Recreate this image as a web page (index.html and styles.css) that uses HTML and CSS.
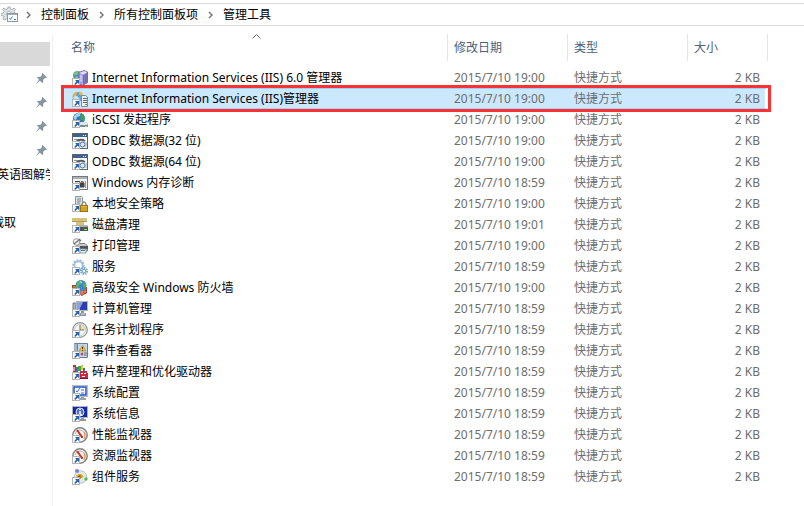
FILE: index.html
```html
<!DOCTYPE html>
<html lang="zh-CN">
  <head>
    <meta charset="UTF-8" />
    <meta name="viewport" content="width=device-width, initial-scale=1.0" />
    <title>管理工具</title>
    <link rel="stylesheet" href="styles.css">
  </head>
  <body>

    <!-- shared icon parts -->
    <svg class="defs" width="0" height="0">
      <symbol id="arrow" viewBox="0 0 16 16">
        <rect x="0.500" y="8.500" width="7" height="7" fill="#fff" stroke="#b4b4b4" />
        <path d="M3 10h4v4L5.600 12.700 3.300 15 2.200 13.900 4.400 11.500z" fill="#2a62ad" />
      </symbol>
      <symbol id="pin" viewBox="0 0 10 10">
        <path d="M6 0l4 4-1 .6-.8-.1L6.500 6.200l.1 1.900-1 .9-2-2L0 10l2.700-3.800L1 4.400l.9-.9 1.900.1 1.700-1.700L5.300.8z" fill="#8795a3" />
      </symbol>
      <symbol id="iis6" viewBox="0 0 16 16">
        <circle cx="5.500" cy="5.500" r="4.500" fill="#4e91d2" />
        <path d="M2 3q2-2 4-2l1 2-2 2H2zM3 7l3-1 1 3-3 1z" fill="#7cc06c" />
        <path d="M7 2.500L12 .5l3.500 1.500v10.500l-5 3L7 13.500z" fill="#a9a3d9" stroke="#716aa9" />
        <path d="M11 5l4-2v9.500l-4 2.500z" fill="#7871b8" />
        <path d="M7.500 3L12 1l3 1.300L11 4.500z" fill="#e2dff5" />
        <path d="M8 6l2 1M8 8l2 1M8 10l2 1" stroke="#e6e3f8" />
      </symbol>
      <symbol id="iis" viewBox="0 0 16 16">
        <circle cx="5.500" cy="6" r="5" fill="#5ba5dd" />
        <path d="M1 6q2-2 4-1l3 3-3 2-3-1z" fill="#c3e6f8" />
        <path d="M1 4q1-3 5-3.500L4 3l1 1-3 2zM7 .5q3 0 4 3l-2 1L7 3z" fill="#f2b43b" />
        <path d="M9.500 4.500h4l2 1.500v9.500h-6z" fill="#eef2f4" stroke="#7e8b95" />
        <path d="M11 7.500h4M11 9.500h4M11 11.500h4" stroke="#5d6a74" />
        <rect x="13" y="13" width="2" height="1" fill="#50a44a" />
      </symbol>
      <symbol id="iscsi" viewBox="0 0 16 16">
        <circle cx="7" cy="6.500" r="6" fill="#3a77b8" />
        <path d="M2 4q3-4 7-3L8 4 5 5 4 8 2 7z" fill="#a5d3ee" />
        <path d="M8 2q4 0 5 4l-2 3-3-2 1-2z" fill="#43a44c" />
        <path d="M7 11l2-1h5l2 2v3H7z" fill="#7f8c96" />
        <path d="M7 11l2-1h5l2 2-1 1H8z" fill="#e0e7eb" />
        <rect x="13" y="14" width="2" height="1" fill="#7be06c" />
      </symbol>
      <symbol id="odbc" viewBox="0 0 16 16">
        <rect x="0.500" y="0.500" width="15" height="15" fill="#f7f7f7" stroke="#596473" />
        <rect x="1" y="1" width="14" height="3" fill="#3f628d" />
        <path d="M11 2.500h1M13 2.500h1" stroke="#fff" />
        <path d="M2 6.500h6" stroke="#8a9096" />
        <path d="M4 9q4-4 9-1" fill="none" stroke="#565d65" stroke-width="2" />
        <circle cx="10.500" cy="11.500" r="2.500" fill="#dce6ee" stroke="#557696" />
        <path d="M14 9v5" stroke="#a4abb2" />
      </symbol>
      <symbol id="memory" viewBox="0 0 16 16">
        <rect x="0.500" y="1.500" width="15" height="13" fill="#f3f3f3" stroke="#777" />
        <rect x="1" y="2" width="14" height="2" fill="#a8b2bb" />
        <path d="M3 6.500h5M7 8h5v4H8z" fill="#444" stroke="#444" />
        <path d="M9 6.500l3 1M3 8.500h3" fill="none" stroke="#895755" stroke-width="1.500" />
        <path d="M13.500 6v7" stroke="#999" />
      </symbol>
      <symbol id="policy" viewBox="0 0 16 16">
        <path d="M3.500 .5h6l1 1v12h-7z" fill="#dce1e3" stroke="#8c969c" />
        <path d="M5 3h4M5 5h4M5 7h3" stroke="#7a868c" />
        <path d="M10 10V8q2-4 4 0v2" fill="none" stroke="#8d8d86" stroke-width="1.500" />
        <rect x="8.500" y="9.500" width="7" height="6" fill="#eab82e" stroke="#9d7312" />
        <path d="M9 12h6M9 14h6" stroke="#bd8a1c" />
      </symbol>
      <symbol id="clean" viewBox="0 0 16 16">
        <path d="M0 1h15v4h-3v4H4V5H0z" fill="#d6c17f" />
        <path d="M0 4.500h15" stroke="#b39b58" />
        <path d="M6 8h9l1 2v4H6z" fill="#4e5356" />
        <path d="M6 8h9l1 2H6z" fill="#a8aeb2" />
        <rect x="12" y="12" width="3" height="1" fill="#75e760" />
      </symbol>
      <symbol id="printer" viewBox="0 0 16 16">
        <path d="M5 5.500h8l2.500 2.500v5H6z" fill="#c3c9cd" stroke="#7c8388" />
        <path d="M8 8h8v3H8z" fill="#4d5357" />
        <path d="M8 11h6v4H8z" fill="#eff4f7" stroke="#8b9499" />
        <path d="M9 12.500h4" stroke="#3577b3" />
        <circle cx="4.500" cy="4" r="3.300" fill="#f3f3f3" stroke="#90979c" />
        <path d="M2 6l5-4M7 1l2 2" stroke="#777" stroke-width="1.500" />
      </symbol>
      <symbol id="services" viewBox="0 0 16 16">
        <circle cx="6.500" cy="6.500" r="5" fill="none" stroke="#9fbdd5" stroke-width="2.500" stroke-dasharray="2 1" />
        <circle cx="6.500" cy="6.500" r="4" fill="#fff" stroke="#9bbdd7" stroke-width="1.500" />
        <circle cx="12" cy="12" r="3" fill="#fff" stroke="#73a6cd" stroke-width="2" stroke-dasharray="1.500 .8" />
        <circle cx="12" cy="12" r="1.800" fill="#fff" stroke="#73a6cd" />
      </symbol>
      <symbol id="firewall" viewBox="0 0 16 16">
        <path d="M0 5h7l4 2h4v6l-5 3-10-6z" fill="#a64632" />
        <path d="M1 7h6M7 12h7M8 14h4M10 10v4M13 9v3" stroke="#dc967e" />
        <circle cx="9" cy="5.500" r="5.500" fill="#3d88c5" />
        <path d="M5 3q2-3 5-3L9 3 7 5 6 9 4 7z" fill="#5fb757" />
        <path d="M11 2l3 2v4l-3-1z" fill="#58ae50" />
        <path d="M8 1l2 1-1 2z" fill="#cdebf6" />
      </symbol>
      <symbol id="computer" viewBox="0 0 16 16">
        <path d="M1 2h3v9H1z" fill="#aab3bc" stroke="#737e88" />
        <rect x="4.500" y="0.500" width="11" height="9" fill="#2c3fac" stroke="#b4b9c0" />
        <path d="M5 1h6L7 9H5z" fill="#8ba1e6" />
        <path d="M9 10h3v2h2v3H8v-3h1z" fill="#89939b" />
        <path d="M9 13h4" stroke="#dce2e5" />
      </symbol>
      <symbol id="clock" viewBox="0 0 16 16">
        <circle cx="8" cy="8" r="7.300" fill="#f4f5f4" stroke="#8d969d" stroke-width="1.200" />
        <path d="M8 8V2a6 6 0 0 1 6 6z" fill="#f5df9e" />
        <circle cx="8" cy="8" r="5.500" fill="none" stroke="#c6ccd1" />
        <path d="M8 3v5h4" fill="none" stroke="#69757e" />
      </symbol>
      <symbol id="events" viewBox="0 0 16 16">
        <path d="M2.500 .5h13v14h-13z" fill="#c3d7e9" stroke="#6681a2" />
        <path d="M3 1h3v13H3z" fill="#6387b0" />
        <path d="M1 2h4M1 4h4M1 6h4M1 8h4" stroke="#e2e7ec" />
        <path d="M10.500 2l3.500 6H7z" fill="#efbf2f" stroke="#9a781d" stroke-width=".5" />
        <path d="M10.500 4v2M10.500 7v1" stroke="#4b3b12" />
        <circle cx="10" cy="11" r="1.500" fill="#d74a42" />
        <path d="M12 10h3M12 12h3" stroke="#667b91" />
      </symbol>
      <symbol id="defrag" viewBox="0 0 16 16">
        <path d="M1 1h3v8H1z" fill="#c32e3a" />
        <path d="M4 3h2v6H4z" fill="#4669c0" />
        <path d="M6 2h3v5H6z" fill="#3fa744" />
        <path d="M9 1h2v5H9z" fill="#e6c736" />
        <path d="M11 4h2v4h-2z" fill="#4669c0" />
        <path d="M8 7h7v2h1v6H8z" fill="#c9283f" />
        <path d="M2 3v4M9 9.500h2M12 9.500h2M10 12.500h3" stroke="#fff" />
        <path d="M8 14.500h8" stroke="#6e1732" />
      </symbol>
      <symbol id="config" viewBox="0 0 16 16">
        <rect x="0.500" y="0.500" width="15" height="11" fill="#fff" stroke="#b5bbc2" />
        <rect x="2" y="2" width="12" height="8" fill="#f4f8ff" stroke="#2350c4" stroke-width="1.500" />
        <path d="M4 6l1 1 3-4M9 5h3M9 8h3" fill="none" stroke="#3a72cf" />
        <path d="M9 12h3v1h2v2H8v-2h1z" fill="#9aa2a9" />
      </symbol>
      <symbol id="info" viewBox="0 0 16 16">
        <rect x="0.500" y="0.500" width="15" height="11" fill="#1429a0" stroke="#aeb5bd" />
        <circle cx="8" cy="6" r="4" fill="#4f70d2" stroke="#dbe4ff" />
        <path d="M8 3v1M8 5v4M7 9h3" stroke="#fff" stroke-width="1.500" />
        <path d="M9 12h3v1h2v2H8v-2h1z" fill="#8e989f" />
      </symbol>
      <symbol id="gauge" viewBox="0 0 16 16">
        <circle cx="8" cy="8" r="7.200" fill="#f5f5f3" stroke="#858585" stroke-width="1.500" />
        <path d="M3 7q1-4 5-4 5 1 5 5" fill="none" stroke="#b6b6b0" />
        <path d="M12 5q2 3 0 7" fill="none" stroke="#e39c66" stroke-width="1.500" />
        <path d="M5 3l5 7" stroke="#d32f26" stroke-width="2" />
        <circle cx="10" cy="10" r="1" fill="#7a2722" />
      </symbol>
      <symbol id="component" viewBox="0 0 16 16">
        <circle cx="8.500" cy="8" r="6.300" fill="#e3e9e8" stroke="#b9c3c5" />
        <circle cx="5" cy="2" r="2" fill="#7c7cdc" />
        <circle cx="14" cy="10" r="1.700" fill="#57b85b" />
        <path d="M4 6h2V5h3l1 1 2 1-2 2H9v1H7V9H5z" fill="#dbaa25" />
        <path d="M6 7.500h2M8 6v3" stroke="#745611" />
      </symbol>
    </svg>

    <nav class="address">
      <svg class="tools" width="18" height="18" viewBox="0 0 18 18">
        <path d="M7 1h2l.5 2 1.500.6L13 2l1.500 1.500L13 5.500l.6 1.500 2.400.5v2l-2 .5V13H5l-2 1-1-1 1-2.500L2.500 10 0 9.500v-2L2.400 7 3 5.500 1.500 3.500 3 2l2 1.600L6.500 3z" fill="#dce1e5" stroke="#a9b1b7" />
        <circle cx="8" cy="8" r="2.500" fill="#fff" stroke="#b1b9be" />
        <rect x="6.500" y="7.500" width="10" height="8" fill="#fff" stroke="#8b989f" />
        <path d="M7 8.500h9" stroke="#a3afb7" />
        <path d="M8.500 12l1 1.500 2-3M13 13.500h2" fill="none" stroke="#3b86c6" />
      </svg>
      <svg class="sep" width="5" height="8" viewBox="0 0 5 8"><path d="M1 1l3 3-3 3" /></svg>
      <a href="#">控制面板</a>
      <svg class="sep" width="5" height="8" viewBox="0 0 5 8"><path d="M1 1l3 3-3 3" /></svg>
      <a href="#">所有控制面板项</a>
      <svg class="sep" width="5" height="8" viewBox="0 0 5 8"><path d="M1 1l3 3-3 3" /></svg>
      <a href="#">管理工具</a>
    </nav>

    <div class="explorer">

      <div class="sidebar">
        <div class="item current"></div>
        <div class="item"><svg width="11" height="11"><use href="#pin" /></svg></div>
        <div class="item"><svg width="11" height="11"><use href="#pin" /></svg></div>
        <div class="item"><svg width="11" height="11"><use href="#pin" /></svg></div>
        <div class="item"><svg width="11" height="11"><use href="#pin" /></svg></div>
        <div class="item"><span>英语图解学</span></div>
        <div class="item"></div>
        <div class="item short"><span>截取</span></div>
      </div>

      <main class="files">
        <table>
          <colgroup>
            <col class="col-name"><col class="col-date"><col class="col-type"><col class="col-size">
          </colgroup>
          <thead>
            <tr>
              <th>名称<svg class="sort" width="9" height="5" viewBox="0 0 9 5"><path d="M.5 4.500l4-4 4 4" /></svg></th>
              <th>修改日期</th>
              <th>类型</th>
              <th>大小</th>
            </tr>
          </thead>
          <tbody id="list"></tbody>
        </table>
      </main>

    </div>
    <script src="script.js"></script>
  </body>
</html>
```
FILE: styles.css
```css
* {
  box-sizing: border-box;
}
body {
  display: flex;
  flex-direction: column;
  margin: 0;
  padding-top: 3px;
  min-height: 100vh;
  background-color: #fff;
  color: #000;
  font-family: "Noto Sans", "Noto Sans CJK SC", sans-serif;
  font-size: 12px;
  line-height: 19px;
}
.defs {
  position: absolute;
}

/* address bar */
.address {
  display: flex;
  align-items: center;
  height: 23px;
  padding-left: 1px;
  border-top: 1px solid #d9d9d9;
  border-bottom: 1px solid #d9d9d9;
}
.address a {
  color: #000;
  text-decoration: none;
}
.sep {
  margin: 0 10px;
  fill: none;
  stroke: #777;
  stroke-width: 1.5;
}
.tools + .sep {
  margin-left: 7px;
}

.explorer {
  display: flex;
  flex: 1;
  padding-top: 8px;
}

/* left pane */
.sidebar {
  flex: none;
  width: 53px;
  padding: 8px 2px 0 0;
  border-right: 1px solid #f0f0f0;
}
.item {
  display: flex;
  align-items: center;
  justify-content: flex-end;
  height: 24px;
  overflow: hidden;
  white-space: nowrap;
}
.item svg {
  margin-right: 3px;
}
.item span {
  margin-right: -7px;
}
.current {
  background-color: #d9d9d9;
}
.item.short span {
  margin-right: 34px;
}

/* file list */
.files {
  flex: 1;
  padding: 0 36px 0 11px;
}
table {
  width: 100%;
  table-layout: fixed;
  border-collapse: separate;
  border-spacing: 0;
}
.col-date,
.col-type {
  width: 120px;
}
.col-size {
  width: 80px;
}
th {
  position: relative;
  height: 27px;
  padding: 0 0 0 6px;
  border-right: 1px solid #e5e5e5;
  color: #4c607a;
  font-weight: normal;
  text-align: left;
}
th:first-child {
  padding-left: 7px;
}
.sort {
  position: absolute;
  top: 0;
  left: 49%;
  fill: none;
  stroke: #666;
}
tbody::before {
  content: "";
  display: block;
  height: 6px;
}
td {
  height: 21px;
  padding: 0 0 0 6px;
  color: #6d6d6d;
  white-space: nowrap;
}
td:first-child {
  padding-left: 8px;
  color: #000;
}
td:last-child {
  padding-right: 8px;
  text-align: right;
}
.name {
  display: flex;
  align-items: center;
  gap: 4px;
}
.selected {
  outline: 3px solid #fb3232;
}
.selected td {
  border-top: 1px solid #99d1ff;
  border-bottom: 1px solid #99d1ff;
  background-color: #cce8ff;
}
.selected td:last-child {
  padding-right: 5px;
  border-right: 3px solid #fff;
}
```
FILE: script.js
```js
var files = [
  ["iis6", "Internet Information Services (IIS) 6.0 管理器", "19:00"],
  ["iis", "Internet Information Services (IIS)管理器", "19:00"],
  ["iscsi", "iSCSI 发起程序", "19:00"],
  ["odbc", "ODBC 数据源(32 位)", "19:00"],
  ["odbc", "ODBC 数据源(64 位)", "19:00"],
  ["memory", "Windows 内存诊断", "18:59"],
  ["policy", "本地安全策略", "19:00"],
  ["clean", "磁盘清理", "19:01"],
  ["printer", "打印管理", "19:00"],
  ["services", "服务", "18:59"],
  ["firewall", "高级安全 Windows 防火墙", "19:00"],
  ["computer", "计算机管理", "18:59"],
  ["clock", "任务计划程序", "18:59"],
  ["events", "事件查看器", "18:59"],
  ["defrag", "碎片整理和优化驱动器", "18:59"],
  ["config", "系统配置", "18:59"],
  ["info", "系统信息", "18:59"],
  ["gauge", "性能监视器", "18:59"],
  ["gauge", "资源监视器", "18:59"],
  ["component", "组件服务", "18:59"]
];

var rows = "";
files.forEach(function (file, i) {
  rows += '<tr' + (i == 1 ? ' class="selected"' : '') + '>' +
    '<td><div class="name"><svg width="16" height="16"><use href="#' + file[0] + '" /><use href="#arrow" /></svg>' + file[1] + '</div></td>' +
    '<td>2015/7/10 ' + file[2] + '</td>' +
    '<td>快捷方式</td>' +
    '<td>2 KB</td></tr>';
});
document.getElementById("list").innerHTML = rows;
```
